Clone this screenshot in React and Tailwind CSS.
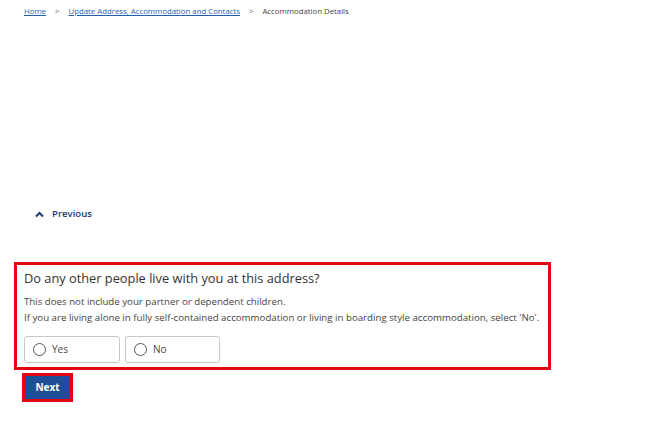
import React from 'react';

const Radio = ({ label, width }) => (
  <label className={`flex h-[27px] ${width} items-center gap-[6px] rounded-[3px] border border-[#c8c8c8] bg-white pl-[8px]`}>
    <span className="h-[13px] w-[13px] rounded-full border-[1.5px] border-[#555]" />
    <span className="text-[10px] text-[#444]">{label}</span>
  </label>
);

export default function App() {
  return (
    <div className="min-h-[426px] w-[650px] bg-white font-['Open_Sans',sans-serif] text-[#333]">
      <nav className="flex items-center gap-[9px] pl-[24px] pt-[5px] text-[7.8px] leading-[12px]">
        <a className="text-[#1f5fae] underline">Home</a>
        <span className="text-[#666]">&gt;</span>
        <a className="text-[#1f5fae] underline">Update Address, Accommodation and Contacts</a>
        <span className="text-[#666]">&gt;</span>
        <span className="text-[#444]">Accommodation Details</span>
      </nav>

      <div className="flex items-center gap-[8px] pl-[35px] pt-[190px]">
        <svg width="9" height="7" viewBox="0 0 9 7">
          <path d="M1 5.5 L4.5 2 L8 5.5" fill="none" stroke="#1e3a6e" strokeWidth="2" />
        </svg>
        <span className="text-[9.6px] font-semibold text-[#1e3a6e]">Previous</span>
      </div>

      <div className="ml-[14px] mt-[41px] w-[537px] border-[3px] border-[#e30613] px-[7px] pb-[4px] pt-[3px]">
        <h2 className="text-[12.8px] leading-[20px] text-[#333]">Do any other people live with you at this address?</h2>
        <p className="mt-[6px] text-[9.7px] leading-[16px] text-[#444]">
          This does not include your partner or dependent children.
          <br />
          If you are living alone in fully self-contained accommodation or living in boarding style accommodation, select 'No'.
        </p>
        <div className="mt-[10px] flex gap-[5px]">
          <Radio label="Yes" width="w-[96px]" />
          <Radio label="No" width="w-[95px]" />
        </div>
      </div>

      <button className="ml-[22px] mt-[3px] flex h-[29px] w-[51px] items-center justify-center border-[3px] border-[#e30613] bg-[#1f4e96] text-[10px] font-bold text-white">
        Next
      </button>
    </div>
  );
}
